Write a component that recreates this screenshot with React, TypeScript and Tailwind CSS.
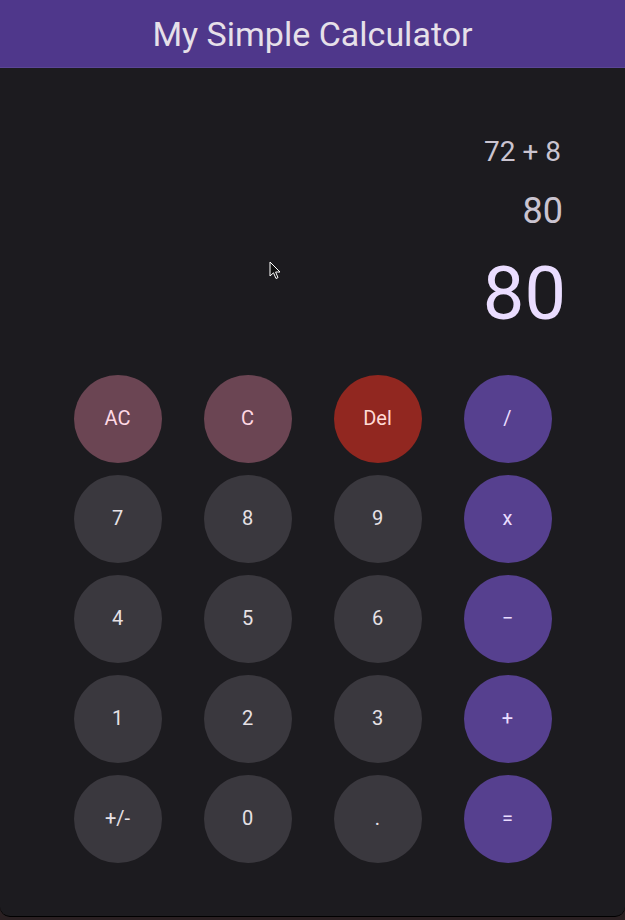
const rows: { label: string; kind: "fn" | "del" | "num" | "op" }[][] = [
  [
    { label: "AC", kind: "fn" },
    { label: "C", kind: "fn" },
    { label: "Del", kind: "del" },
    { label: "/", kind: "op" },
  ],
  [
    { label: "7", kind: "num" },
    { label: "8", kind: "num" },
    { label: "9", kind: "num" },
    { label: "x", kind: "op" },
  ],
  [
    { label: "4", kind: "num" },
    { label: "5", kind: "num" },
    { label: "6", kind: "num" },
    { label: "−", kind: "op" },
  ],
  [
    { label: "1", kind: "num" },
    { label: "2", kind: "num" },
    { label: "3", kind: "num" },
    { label: "+", kind: "op" },
  ],
  [
    { label: "+/-", kind: "num" },
    { label: "0", kind: "num" },
    { label: ".", kind: "num" },
    { label: "=", kind: "op" },
  ],
];

const kindClass = {
  fn: "bg-[#6b4553] text-[#ffd8e4]",
  del: "bg-[#912720] text-[#ffdad6]",
  num: "bg-[#3a383e] text-[#e6e1e5]",
  op: "bg-[#56408f] text-[#eaddff]",
};

function Cursor() {
  return (
    <svg
      className="absolute left-[269px] top-[261px]"
      width="12"
      height="19"
      viewBox="0 0 12 19"
    >
      <path
        d="M1 1 L1 15 L4.5 11.8 L7 17.5 L9 16.6 L6.6 11 L11 11 Z"
        fill="#111"
        stroke="#fff"
        strokeWidth="1"
        strokeLinejoin="round"
      />
    </svg>
  );
}

export default function App() {
  return (
    <div className="h-[920px] w-[625px] bg-[#2a2022] font-['Roboto',sans-serif]">
      <div className="relative flex h-[917px] flex-col overflow-hidden rounded-b-[10px] border-b border-black bg-[#1c1b1f]">
        <header className="flex h-[68px] items-center justify-center border-b border-[#5b4596] bg-[#4f378b]">
          <h1 className="text-[34px] leading-none text-[#e6e0e9]">My Simple Calculator</h1>
        </header>

        <div className="flex flex-col items-end pr-[64px] pt-[70px]">
          <p className="text-[28px] leading-[28px] text-[#cac4d0]">72 + 8</p>
          <p className="mt-[27px] mr-[-2px] text-[36px] leading-[36px] text-[#cac4d0]">80</p>
          <p className="mt-[28px] mr-[-5px] text-[74px] leading-[74px] text-[#eaddff]">80</p>
        </div>

        <div className="mt-[44px] grid grid-cols-[repeat(4,88px)] justify-center gap-x-[42px] gap-y-[12px]">
          {rows.flat().map((b) => (
            <button
              key={b.label}
              className={`flex h-[88px] w-[88px] items-center justify-center rounded-full pb-[2px] text-[20px] ${kindClass[b.kind]}`}
            >
              {b.label}
            </button>
          ))}
        </div>

        <Cursor />
      </div>
    </div>
  );
}
